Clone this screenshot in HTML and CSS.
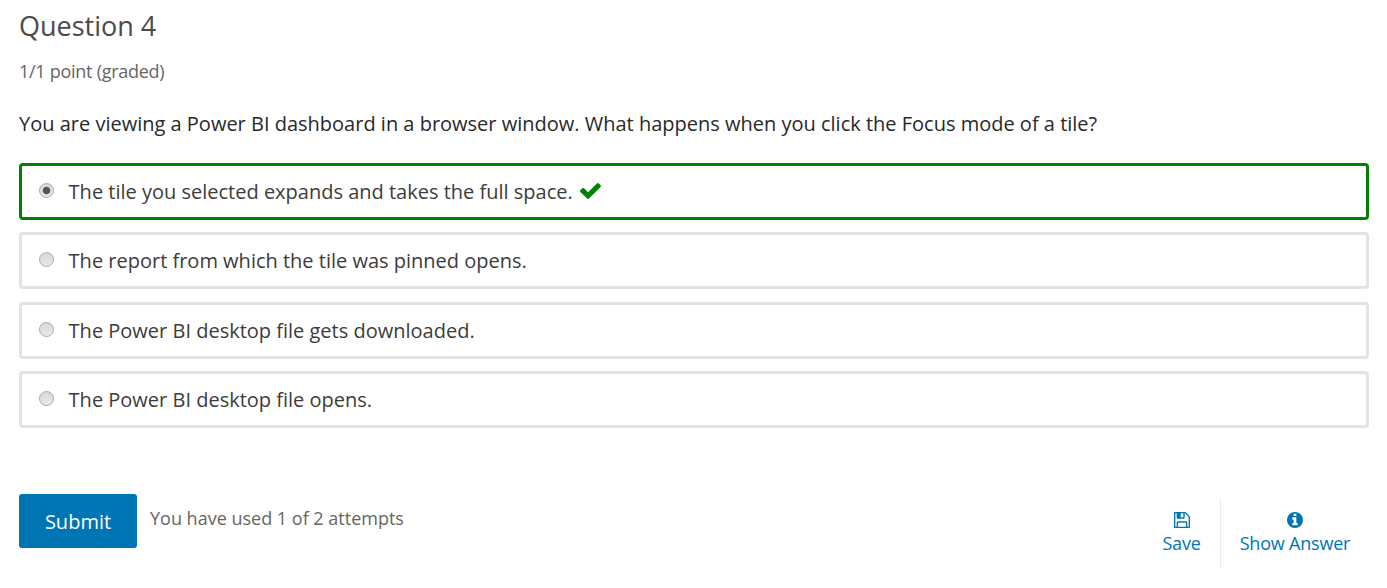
FILE: index.html
```html
<!DOCTYPE html>
<html lang="en">
<head>
<meta charset="utf-8">
<title>Question 4</title>
<link rel="stylesheet" href="styles.css">
</head>
<body>
<main class="problem">
  <h3 class="title"><span>Question 4</span></h3>
  <p class="progress"><span>1/1 point (graded)</span></p>
  <p class="prompt"><span>You are viewing a Power BI dashboard in a browser window. What happens when you click the Focus mode of a tile?</span></p>
  <div class="choices">
    <label class="choice correct"><i class="radio checked"></i><span class="text">The tile you selected expands and takes the full space.</span>
      <svg class="check" viewBox="121 334 1550 1188"><path d="M1671 566q0 40-28 68l-724 724-136 136q-28 28-68 28t-68-28l-136-136-362-362q-28-28-28-68t28-68l136-136q28-28 68-28t68 28l294 295 656-657q28-28 68-28t68 28l136 136q28 28 28 68z"/></svg>
    </label>
    <label class="choice"><i class="radio"></i><span class="text">The report from which the tile was pinned opens.</span></label>
    <label class="choice"><i class="radio"></i><span class="text">The Power BI desktop file gets downloaded.</span></label>
    <label class="choice"><i class="radio"></i><span class="text">The Power BI desktop file opens.</span></label>
  </div>
  <div class="actions">
    <button class="submit"><span>Submit</span></button>
    <p class="attempts"><span>You have used 1 of 2 attempts</span></p>
    <button class="action save">
      <svg class="icon" viewBox="0 0 1536 1536"><path d="M384 1408h768v-384H384v384zm896 0h128V512q0-14-10-38.500t-20-34.500l-281-281q-10-10-34-20t-39-10v416q0 40-28 68t-68 28H352q-40 0-68-28t-28-68V128H128v1280h128V992q0-40 28-68t68-28h832q40 0 68 28t28 68v416zM896 480V160q0-13-9.500-22.500T864 128H672q-13 0-22.500 9.500T640 160v320q0 13 9.500 22.500T672 512h192q13 0 22.500-9.500T896 480zm640 32v928q0 40-28 68t-68 28H96q-40 0-68-28t-28-68V96q0-40 28-68T96 0h928q40 0 88 20t76 48l280 280q28 28 48 76t20 88z"/></svg>
      <span>Save</span>
    </button>
    <button class="action answer">
      <svg class="icon" viewBox="0 0 1536 1536"><path d="M1024 1248v-160q0-14-9-23t-23-9h-96V544q0-14-9-23t-23-9H544q-14 0-23 9t-9 23v160q0 14 9 23t23 9h96v320h-96q-14 0-23 9t-9 23v160q0 14 9 23t23 9h448q14 0 23-9t9-23zM896 352V192q0-14-9-23t-23-9H672q-14 0-23 9t-9 23v160q0 14 9 23t23 9h192q14 0 23-9t9-23zm640 416q0 209-103 385.500T1153.500 1433 768 1536t-385.500-103T103 1153.500 0 768t103-385.500T382.500 103 768 0t385.500 103T1433 382.500 1536 768z"/></svg>
      <span>Show Answer</span>
    </button>
  </div>
</main>
</body>
</html>
```

FILE: styles.css
```css
* { box-sizing: border-box; }
body { margin: 0; background: #fff; color: #3c3c3c; font-family: "Open Sans", sans-serif; }
h3, p { margin: 0; font-weight: 400; white-space: nowrap; }
button { font-family: inherit; border: 0; padding: 0; cursor: pointer; white-space: nowrap; }
.problem { padding: 7px 18px 0 19px; }
.title { font-size: 27px; line-height: 38px; color: #4a4a4a; }
.progress { margin-top: 13px; font-size: 18px; line-height: 26px; letter-spacing: -0.27px; color: #666; }
.prompt { margin-top: 26px; font-size: 20px; line-height: 28px; color: #292929; }
.choices { display: flex; flex-direction: column; gap: 12.4px; margin-top: 25px; }
.choice { display: flex; align-items: center; height: 57px; padding: 0 17px; border: 3px solid #e3e3e3; border-radius: 4px; font-size: 20px; white-space: nowrap; }
.correct { border-color: #008100; }
.radio { width: 15px; height: 15px; margin: -2px 14.6px 0 0; border: 1px solid #aaa; border-radius: 50%; background: linear-gradient(#d8d8d8, #e9e9e9); }
.checked { background: radial-gradient(circle, #555 0 3.3px, transparent 4.2px), linear-gradient(#d8d8d8, #e9e9e9); }
.check { width: 21px; height: 16px; margin: -2px 0 0 7px; fill: #008100; }
.actions { display: flex; align-items: flex-start; margin-top: 65.8px; }
.submit { width: 118px; height: 54px; padding-top: 1px; background: #0075b4; border-radius: 3px; color: #fff; font-size: 20px; font-weight: 500; }
.attempts { margin: 11px auto 0 13px; font-size: 18px; line-height: 26px; color: #666; }
.action { display: flex; flex-direction: column; align-items: center; height: 70px; margin-top: 4px; padding-top: 14px; background: none; color: #0075b4; font-size: 18px; line-height: 26px; letter-spacing: -0.2px; }
.icon { width: 16px; height: 16px; margin-bottom: 2px; fill: currentColor; }
.save { width: 77px; }
.answer { width: 149px; border-left: 1px solid #ececec; }
```
